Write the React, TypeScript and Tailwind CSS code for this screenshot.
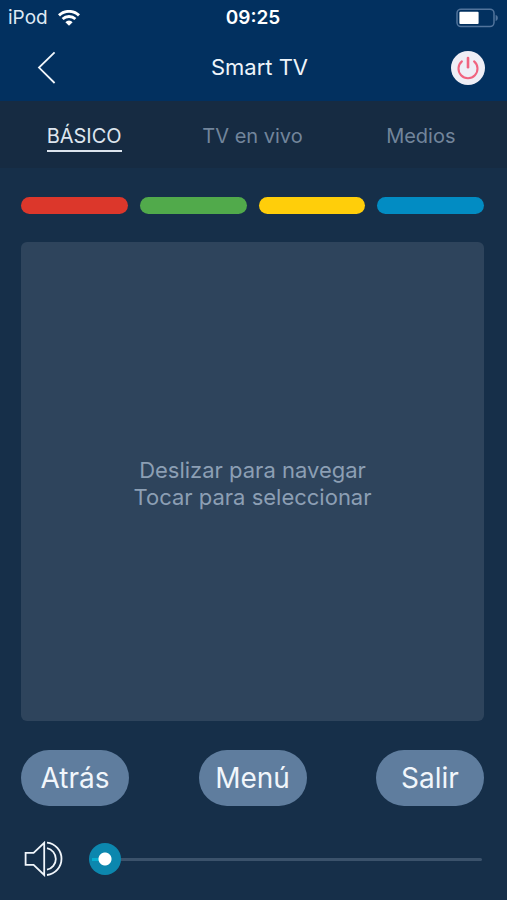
import { useState } from "react";

const tabs = ["BÁSICO", "TV en vivo", "Medios"];

const colorKeys = [
  { name: "Rojo", color: "bg-[#dc372b]" },
  { name: "Verde", color: "bg-[#51aa4b]" },
  { name: "Amarillo", color: "bg-[#ffce0a]" },
  { name: "Azul", color: "bg-[#028cc3]" },
];

function WifiIcon() {
  return (
    <svg width="22" height="16" viewBox="0 0 22 16" fill="none" aria-hidden="true">
      <path d="M1 5.4a14.4 14.4 0 0 1 20 0" stroke="#fff" strokeWidth="2.9" />
      <path d="M4.6 9.1a9.2 9.2 0 0 1 12.8 0" stroke="#fff" strokeWidth="2.8" />
      <path d="M11 15.8 7.4 12.2a4.9 4.9 0 0 1 7.2 0Z" fill="#fff" />
    </svg>
  );
}

function BatteryIcon() {
  return (
    <svg width="43" height="20" viewBox="0 0 43 20" fill="none" aria-hidden="true">
      <rect x="2" y="1.2" width="37" height="17.4" rx="4" stroke="#52749c" strokeWidth="1.5" />
      <rect x="4.4" y="3.8" width="19.2" height="12.2" rx="1" fill="#fff" />
      <path d="M40.6 6.8c1.6.8 2.2 1.8 2.2 3.1s-.6 2.3-2.2 3.1Z" fill="#52749c" />
    </svg>
  );
}

function PowerIcon() {
  return (
    <svg width="24" height="24" viewBox="0 0 24 24" fill="none" stroke="#f0637f" strokeWidth="2.1" strokeLinecap="round" aria-hidden="true">
      <path d="M12 2v9.2" strokeWidth="2.6" />
      <path d="M5.9 5.4a9.5 9.5 0 1 0 12.2 0" />
    </svg>
  );
}

function SpeakerIcon() {
  return (
    <svg width="40" height="36" viewBox="0 0 40 36" fill="none" stroke="#f1f6fb" strokeWidth="1.8" aria-hidden="true">
      <path d="M2.6 11.8H10.6L21.2 1.8V34L10.6 23.8H2.6Z" />
      <path d="M24 7.2a10.9 10.9 0 0 1 0 21.4" />
      <path d="M24 1.6a16.3 16.3 0 0 1 0 32.4" />
    </svg>
  );
}

export default function App() {
  const [active, setActive] = useState("BÁSICO");
  const [volume, setVolume] = useState(0);

  return (
    <div className="flex min-h-screen flex-col bg-[#162f49] font-['Inter','Liberation_Sans',sans-serif] text-white">
      <header className="bg-[#02305f]">
        <div className="grid h-9 grid-cols-3 items-center pl-2 pr-[9px] text-[19px]">
          <div className="flex items-center gap-[10px] text-[#dfe9f4]">
            <span>iPod</span>
            <WifiIcon />
          </div>
          <time className="text-center font-semibold">09:25</time>
          <div className="flex justify-end">
            <BatteryIcon />
          </div>
        </div>
        <div className="grid h-[65px] grid-cols-3 items-center pb-[2px] pl-[34px] pr-[22px]">
          <button type="button" aria-label="Volver" className="flex w-6 justify-start">
            <svg width="24" height="34" viewBox="0 0 24 34" fill="none" stroke="#f1f6fb" strokeWidth="1.8" aria-hidden="true">
              <path d="M20.6 1.4 5 16.6 20.6 32" />
            </svg>
          </button>
          <h1 className="whitespace-nowrap text-center text-[22px] text-[#eef4fa]">Smart TV</h1>
          <button type="button" aria-label="Encender o apagar" className="flex size-[34px] items-center justify-center justify-self-end rounded-full bg-[#eeeef6]">
            <PowerIcon />
          </button>
        </div>
      </header>

      <nav className="grid h-[67px] grid-cols-3 items-start justify-items-center bg-[#162b42] pr-[2px] pt-[23px]">
        {tabs.map((tab) => (
          <button
            key={tab}
            type="button"
            onClick={() => setActive(tab)}
            className={
              tab === active
                ? "border-b-2 border-[#dde5ee] pb-px text-xl leading-[25px] text-[#dde5ee]"
                : "border-b-2 border-transparent pb-px text-xl leading-[25px] text-[#72859b]"
            }
          >
            {tab}
          </button>
        ))}
      </nav>

      <main className="flex flex-1 flex-col pb-[23px] pl-[21px] pr-[23px] pt-[29px]">
        <div className="grid grid-cols-4 gap-3">
          {colorKeys.map((key) => (
            <button key={key.name} type="button" aria-label={key.name} className={`h-[17px] rounded-full ${key.color}`} />
          ))}
        </div>

        <section className="mt-7 flex flex-1 items-center justify-center rounded-md bg-[#2e445c] pb-10 pt-11 text-center text-[22px] leading-[27px] text-[#8c9fb4]">
          <p>
            Deslizar para navegar
            <br />
            Tocar para seleccionar
          </p>
        </section>

        <div className="mt-[29px] flex justify-between text-[28px] text-[#f1f6fb]">
          <button type="button" className="h-14 w-[108px] rounded-full bg-[#5f7d9e]">Atrás</button>
          <button type="button" className="h-14 w-[108px] rounded-full bg-[#5f7d9e]">Menú</button>
          <button type="button" className="h-14 w-[108px] rounded-full bg-[#5f7d9e]">Salir</button>
        </div>

        <div className="mt-[35px] flex items-center pl-[2px] pr-[2px]">
          <label htmlFor="volume" aria-label="Volumen" className="w-[66px]">
            <SpeakerIcon />
          </label>
          <input
            id="volume"
            type="range"
            min={0}
            max={100}
            value={volume}
            onChange={(e) => setVolume(Number(e.target.value))}
            className="h-8 min-w-0 flex-1 appearance-none bg-transparent [&::-webkit-slider-runnable-track]:h-[3px] [&::-webkit-slider-runnable-track]:rounded-full [&::-webkit-slider-runnable-track]:bg-[#3b526b] [&::-webkit-slider-thumb]:-mt-[15px] [&::-webkit-slider-thumb]:size-8 [&::-webkit-slider-thumb]:appearance-none [&::-webkit-slider-thumb]:rounded-full [&::-webkit-slider-thumb]:bg-[radial-gradient(circle,#fff_6px,transparent_7px),linear-gradient(#06aed0,#06aed0),linear-gradient(#0c87ae,#0c87ae)] [&::-webkit-slider-thumb]:bg-[length:100%_100%,8px_3px,100%_100%] [&::-webkit-slider-thumb]:bg-[position:0_0,3px_15px,0_0] [&::-webkit-slider-thumb]:bg-no-repeat"
          />
        </div>
      </main>
    </div>
  );
}
